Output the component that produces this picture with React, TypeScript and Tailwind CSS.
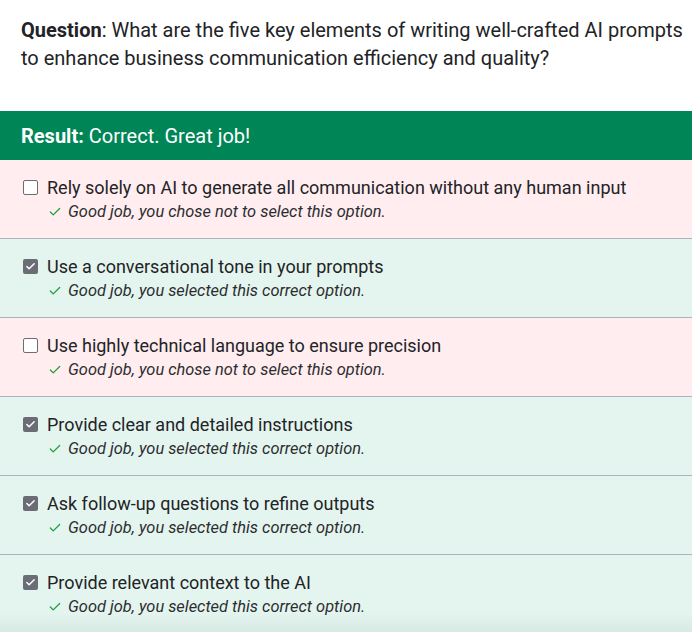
import { Check } from "lucide-react";

type Option = {
  label: string;
  selected: boolean;
  correct: boolean;
};

const options: Option[] = [
  { label: "Rely solely on AI to generate all communication without any human input", selected: false, correct: false },
  { label: "Use a conversational tone in your prompts", selected: true, correct: true },
  { label: "Use highly technical language to ensure precision", selected: false, correct: false },
  { label: "Provide clear and detailed instructions", selected: true, correct: true },
  { label: "Ask follow-up questions to refine outputs", selected: true, correct: true },
  { label: "Provide relevant context to the AI", selected: true, correct: true },
];

function Box({ checked }: { checked: boolean }) {
  if (checked) {
    return (
      <span className="mt-[4px] flex h-[15px] w-[15px] shrink-0 items-center justify-center rounded-[2px] bg-[#6b6d76]">
        <Check size={11} strokeWidth={3.2} className="text-white" />
      </span>
    );
  }
  return (
    <span className="mt-[4px] h-[15px] w-[15px] shrink-0 rounded-[2px] border-[1.5px] border-[#6b6d76] bg-white" />
  );
}

export default function App() {
  return (
    <div
      className="relative h-[632px] w-[692px] overflow-hidden bg-white text-[#222326]"
      style={{ fontFamily: "Roboto, 'Liberation Sans', sans-serif" }}
    >
      <p className="pl-[21px] pr-[8px] pt-[16px] text-[20px] leading-[28px]">
        <span className="font-bold">Question</span>: What are the five key elements of writing well-crafted AI prompts
        to enhance business communication efficiency and quality?
      </p>

      <div className="mt-[39px] flex h-[49px] items-center bg-[#008556] px-[21px] text-[20px] text-white">
        <span className="font-bold">Result:</span>
        <span className="ml-[5px]">Correct. Great job!</span>
      </div>

      <div>
        {options.map((o) => (
          <div
            key={o.label}
            className={`border-b border-[#aeb2bf] px-[23px] pb-[16px] pt-[16px] ${
              o.correct ? "bg-[#e4f5ef]" : "bg-[#ffedf0]"
            }`}
          >
            <div className="flex items-start gap-[9px]">
              <Box checked={o.selected} />
              <span className="text-[18px] leading-[24px] text-[#222326]">{o.label}</span>
            </div>
            <div className="mt-[1px] flex items-center pl-[25px] text-[16.4px] italic leading-[21px] text-[#2c2d30]">
              <Check size={14} strokeWidth={2.2} className="mr-[6px] text-[#1e9e3e]" />
              <span>
                {o.selected
                  ? "Good job, you selected this correct option."
                  : "Good job, you chose not to select this option."}
              </span>
            </div>
          </div>
        ))}
      </div>

      <div className="pointer-events-none absolute bottom-0 left-0 h-[20px] w-full bg-gradient-to-b from-transparent to-[rgba(0,0,0,0.05)]" />
    </div>
  );
}
